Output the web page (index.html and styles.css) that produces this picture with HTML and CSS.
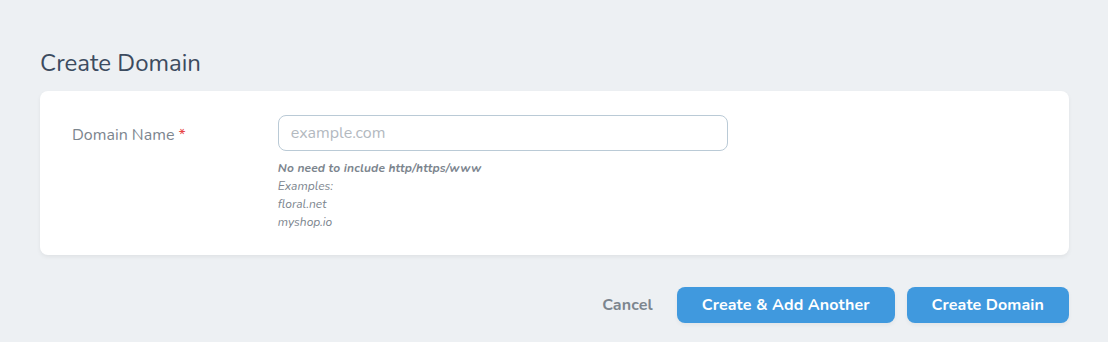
FILE: index.html
```html
<!DOCTYPE html>
<html lang="en">
<head>
<meta charset="utf-8">
<title>Create Domain</title>
<link rel="stylesheet" href="styles.css">
</head>
<body>
<main class="page">
  <h1 class="title">Create Domain</h1>
  <form class="card">
    <div class="field">
      <div class="field-label">
        <label for="domain">Domain Name <span class="req">*</span></label>
      </div>
      <div class="field-input">
        <input id="domain" class="input" type="text" placeholder="example.com">
        <div class="help">
          <strong>No need to include http/https/www</strong>
          <span>Examples:</span>
          <span>floral.net</span>
          <span>myshop.io</span>
        </div>
      </div>
    </div>
  </form>
  <div class="actions">
    <a class="cancel" href="#">Cancel</a>
    <button class="btn" type="button">Create &amp; Add Another</button>
    <button class="btn" type="button">Create Domain</button>
  </div>
</main>
</body>
</html>
```
FILE: styles.css
```css
* { box-sizing: border-box; }
html, body { margin: 0; padding: 0; }
body {
  background: #edf0f3;
  font-family: "Nunito", Lato, "Noto Sans", sans-serif;
  color: #3c4b5f;
}
.page {
  padding: 47px 39px 20px 40px;
}
.title {
  margin: 0 0 12px;
  font-size: 24px;
  line-height: 32px;
  font-weight: 400;
  color: #3c4b5f;
}
.card {
  background: #fff;
  border-radius: 8px;
  box-shadow: 0 2px 4px 0 rgba(0,0,0,0.06);
}
.field {
  display: flex;
  padding: 24px 0;
}
.field-label {
  width: 20%;
  padding: 8px 32px 0;
  font-size: 16px;
  line-height: 24px;
  color: #7c858e;
}
.req { color: #e74444; }
.field-input {
  width: 50%;
  padding: 0 32px;
}
.input {
  display: block;
  width: 100%;
  height: 36px;
  border: 1px solid #bacad6;
  border-radius: 8px;
  padding: 0 12px;
  font-family: inherit;
  font-size: 16px;
  color: #3c4b5f;
  background: #fff;
  outline: none;
}
.input::placeholder { color: #b3b9bf; }
.help {
  display: flex;
  flex-direction: column;
  margin-top: 8px;
  font-size: 12px;
  line-height: 18px;
  font-style: italic;
  color: #7c858e;
}
.help strong { font-weight: 700; letter-spacing: 0.15px; }
.actions {
  display: flex;
  justify-content: flex-end;
  align-items: center;
  margin-top: 32px;
}
.cancel {
  font-size: 16px;
  font-weight: 700;
  color: #7c858e;
  text-decoration: none;
  margin-right: 24px;
  letter-spacing: 0.1px;
}
.btn {
  height: 36px;
  padding: 0 25px;
  border: 0;
  border-radius: 8px;
  background: #4099de;
  color: #fff;
  font-family: inherit;
  font-size: 16px;
  font-weight: 700;
  letter-spacing: 0.1px;
  margin-left: 12px;
  box-shadow: 0 2px 4px 0 rgba(0,0,0,0.05);
}
.cancel + .btn { margin-left: 0; }
```
